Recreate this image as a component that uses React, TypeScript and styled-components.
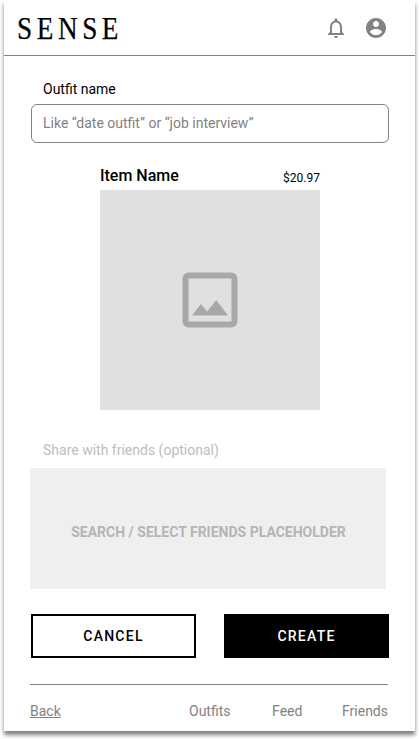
import React from 'react';
import styled, { createGlobalStyle } from 'styled-components';

const GlobalStyle = createGlobalStyle`
  * { box-sizing: border-box; }
  body { margin: 0; background: #fff; overflow: hidden; font-family: Roboto, sans-serif; }
`;

const Screen = styled.main`
  width: 411px;
  height: 731px;
  margin: 0 4px 8px;
  display: flex;
  flex-direction: column;
  background: #fff;
  box-shadow: 0 4px 4px rgba(0, 0, 0, 0.5);
`;

const Header = styled.header`
  height: 56px;
  flex: none;
  display: flex;
  align-items: center;
  justify-content: space-between;
  padding: 0 27px 0 12.5px;
  border-bottom: 1px solid #828282;
`;

const Logo = styled.h1`
  margin: 1px 0 0;
  font: 400 32px/40px 'Liberation Serif', serif;
  letter-spacing: 5.4px;
  transform: scaleX(0.85);
  transform-origin: left;
  -webkit-text-stroke: 0.25px #000;
`;

const HeaderIcons = styled.div`
  display: flex;
  gap: 16px;
  color: #828282;

  svg { display: block; fill: currentColor; }
`;

const Content = styled.div`
  display: flex;
  flex-direction: column;
  padding: 23px 26px 0;
`;

const Label = styled.label<{ $muted?: boolean }>`
  padding-left: 13px;
  font-size: 14px;
  line-height: 20px;
  color: ${(p) => (p.$muted ? '#bdbdbd' : '#000')};
`;

const NameInput = styled.input`
  width: 358px;
  height: 39px;
  margin: 5px 0 0 1px;
  padding: 0 11px 2px;
  border: 1px solid #828282;
  border-radius: 6px;
  outline: none;
  background: #fff;
  font: 400 14px Roboto, sans-serif;

  &::placeholder { color: #828282; opacity: 1; }
`;

const Item = styled.section`
  width: 220px;
  margin: 22px 0 30px 70px;
`;

const ItemHeading = styled.div`
  height: 25px;
  display: flex;
  align-items: flex-start;
  justify-content: space-between;
`;

const ItemName = styled.h2`
  margin: 0;
  font-size: 16px;
  line-height: 22px;
  font-weight: 500;
`;

const Price = styled.span`
  font-size: 12px;
  line-height: 14px;
  padding-top: 6px;
`;

const ItemPhoto = styled.div`
  height: 220px;
  display: flex;
  align-items: center;
  justify-content: center;
  background: #e0e0e0;

  svg { display: block; }
`;

const FriendsPicker = styled.div`
  width: 356px;
  height: 121px;
  margin-top: 8px;
  display: flex;
  align-items: center;
  justify-content: center;
  padding: 7px 0 0 1px;
  background: #efefef;
  color: #b5b5b5;
  font-size: 14px;
  font-weight: 700;
`;

const Actions = styled.div`
  display: flex;
  gap: 28px;
  margin: 25px 0 0 1px;
`;

const Button = styled.button<{ $primary?: boolean }>`
  width: 165px;
  height: 44px;
  padding: 0;
  border: 2px solid #000;
  background: ${(p) => (p.$primary ? '#000' : '#fff')};
  color: ${(p) => (p.$primary ? '#fff' : '#000')};
  font: 500 14px Roboto, sans-serif;
  letter-spacing: 1.25px;
`;

const Footer = styled.footer`
  width: 358px;
  margin-top: 26px;
  padding-top: 16px;
  display: flex;
  justify-content: space-between;
  border-top: 1px solid #828282;
`;

const FooterLinks = styled.nav`
  width: 199px;
  display: flex;
  justify-content: space-between;
`;

const FooterLink = styled.a<{ $underlined?: boolean }>`
  font-size: 14px;
  line-height: 20px;
  color: #828282;
  text-decoration: ${(p) => (p.$underlined ? 'underline' : 'none')};

  &:nth-child(2) { margin-left: 2px; }
`;

const BellIcon = () => (
  <svg width="24" height="24" viewBox="0 0 24 24">
    <path d="M12 22c1.1 0 2-.9 2-2h-4c0 1.1.9 2 2 2zm6-6v-5c0-3.07-1.63-5.64-4.5-6.32V4c0-.83-.67-1.5-1.5-1.5s-1.5.67-1.5 1.5v.68C7.64 5.36 6 7.92 6 11v5l-2 2v1h16v-1l-2-2zm-2 1H8v-6c0-2.48 1.51-4.5 4-4.5s4 2.02 4 4.5v6z" />
  </svg>
);

const AccountIcon = () => (
  <svg width="24" height="24" viewBox="0 0 24 24">
    <path d="M12 2C6.48 2 2 6.48 2 12s4.48 10 10 10 10-4.48 10-10S17.52 2 12 2zm0 3c1.66 0 3 1.34 3 3s-1.34 3-3 3-3-1.34-3-3 1.34-3 3-3zm0 14.2c-2.5 0-4.71-1.28-6-3.22.03-1.99 4-3.08 6-3.08 1.99 0 5.97 1.09 6 3.08-1.29 1.94-3.5 3.22-6 3.22z" />
  </svg>
);

const PhotoIcon = () => (
  <svg width="56" height="56" viewBox="0 0 56 56">
    <rect x="3.5" y="3.5" width="49" height="49" rx="3" fill="none" stroke="#a8a8a8" strokeWidth="6" />
    <path d="M10 43.5 18.8 32l6.4 7.5 9-11.5L46 43.5z" fill="#a8a8a8" />
  </svg>
);

export default function App() {
  return (
    <>
      <GlobalStyle />
      <Screen>
        <Header>
          <Logo>SENSE</Logo>
          <HeaderIcons>
            <BellIcon />
            <AccountIcon />
          </HeaderIcons>
        </Header>
        <Content>
          <Label htmlFor="outfit">Outfit name</Label>
          <NameInput id="outfit" placeholder="Like “date outfit” or “job interview”" />
          <Item>
            <ItemHeading>
              <ItemName>Item Name</ItemName>
              <Price>$20.97</Price>
            </ItemHeading>
            <ItemPhoto>
              <PhotoIcon />
            </ItemPhoto>
          </Item>
          <Label as="div" $muted>Share with friends (optional)</Label>
          <FriendsPicker>SEARCH / SELECT FRIENDS PLACEHOLDER</FriendsPicker>
          <Actions>
            <Button>CANCEL</Button>
            <Button $primary>CREATE</Button>
          </Actions>
          <Footer>
            <FooterLink $underlined>Back</FooterLink>
            <FooterLinks>
              <FooterLink>Outfits</FooterLink>
              <FooterLink>Feed</FooterLink>
              <FooterLink>Friends</FooterLink>
            </FooterLinks>
          </Footer>
        </Content>
      </Screen>
    </>
  );
}
